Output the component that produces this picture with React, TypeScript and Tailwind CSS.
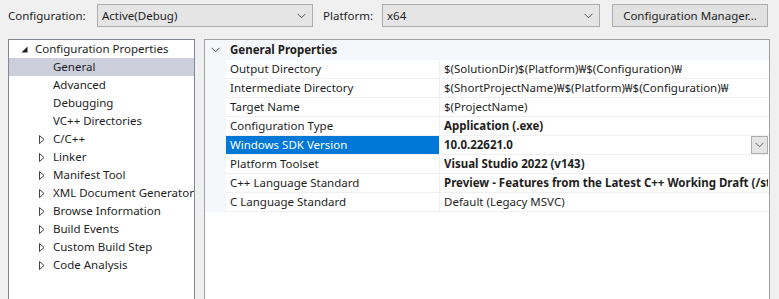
import React from 'react';

const font = { fontFamily: '"Noto Sans", "Noto Sans CJK KR", sans-serif' };

const Chevron: React.FC<{ className?: string }> = ({ className }) => (
  <svg width="9" height="6" viewBox="0 0 9 6" className={className}>
    <path d="M0.5 0.8 L4.5 4.8 L8.5 0.8" fill="none" stroke="currentColor" strokeWidth="1" />
  </svg>
);

const Combo: React.FC<{ value: string; width: string }> = ({ value, width }) => (
  <div className={`${width} h-[23px] flex items-center justify-between border border-[#adadad] bg-[#e5e5e5] pl-[4px] pr-[6px]`}>
    <span>{value}</span>
    <Chevron className="text-[#606060]" />
  </div>
);

const Collapsed = () => (
  <svg width="6" height="9" viewBox="0 0 6 9" className="text-[#404040]">
    <path d="M0.5 0.5 L5 4.5 L0.5 8.5 Z" fill="none" stroke="currentColor" strokeWidth="1" />
  </svg>
);

const Expanded = () => (
  <svg width="7" height="7" viewBox="0 0 7 7">
    <path d="M6.5 0.5 L6.5 6.5 L0.5 6.5 Z" fill="#1e1e1e" />
  </svg>
);

const treeItems: { label: string; expandable?: boolean }[] = [
  { label: 'General' },
  { label: 'Advanced' },
  { label: 'Debugging' },
  { label: 'VC++ Directories' },
  { label: 'C/C++', expandable: true },
  { label: 'Linker', expandable: true },
  { label: 'Manifest Tool', expandable: true },
  { label: 'XML Document Generator', expandable: true },
  { label: 'Browse Information', expandable: true },
  { label: 'Build Events', expandable: true },
  { label: 'Custom Build Step', expandable: true },
  { label: 'Code Analysis', expandable: true },
];

const rows: { name: string; value: string; bold?: boolean; selected?: boolean }[] = [
  { name: 'Output Directory', value: '$(SolutionDir)$(Platform)₩$(Configuration)₩' },
  { name: 'Intermediate Directory', value: '$(ShortProjectName)₩$(Platform)₩$(Configuration)₩' },
  { name: 'Target Name', value: '$(ProjectName)' },
  { name: 'Configuration Type', value: 'Application (.exe)', bold: true },
  { name: 'Windows SDK Version', value: '10.0.22621.0', bold: true, selected: true },
  { name: 'Platform Toolset', value: 'Visual Studio 2022 (v143)', bold: true },
  { name: 'C++ Language Standard', value: 'Preview - Features from the Latest C++ Working Draft (/std:c++latest)', bold: true },
  { name: 'C Language Standard', value: 'Default (Legacy MSVC)' },
];

export default function App() {
  return (
    <div className="w-[779px] h-[299px] bg-[#f0f0f0] overflow-hidden text-[11.5px] text-[#1e1e1e]" style={font}>
      {/* toolbar */}
      <div className="flex items-center h-[30px] pt-[1px] pl-[8px]">
        <span className="w-[89px]">Configuration:</span>
        <Combo value="Active(Debug)" width="w-[216px]" />
        <span className="ml-[10px] w-[59px]">Platform:</span>
        <Combo value="x64" width="w-[218px]" />
        <div className="ml-[12px] w-[156px] h-[23px] flex items-center justify-center border border-[#adadad] bg-[#e1e1e1]">
          Configuration Manager...
        </div>
      </div>

      <div className="flex mt-[9px] h-[270px]">
        {/* tree */}
        <div className="ml-[8px] w-[187px] shrink-0 h-full border border-[#828790] bg-white overflow-hidden">
          <div className="h-[18px] flex items-center pl-[12px] gap-[7px] whitespace-nowrap">
            <Expanded />
            <span>Configuration Properties</span>
          </div>
          {treeItems.map((item) => (
            <div
              key={item.label}
              className={`h-[18px] flex items-center whitespace-nowrap ${item.label === 'General' ? 'bg-[#cccedb]' : ''}`}
            >
              <div className="w-[44px] shrink-0 flex justify-end pr-[8px]">{item.expandable && <Collapsed />}</div>
              <span>{item.label}</span>
            </div>
          ))}
        </div>

        {/* property grid */}
        <div className="ml-[9px] w-[566px] shrink-0 h-full border border-[#a0a0a0] bg-white overflow-hidden">
          <div className="h-[20px] flex items-center bg-[#f5f7fa]">
            <div className="w-[21px] shrink-0 flex justify-center">
              <Chevron className="text-[#505050]" />
            </div>
            <span className="font-bold pl-[4px]">General Properties</span>
          </div>
          <div className="flex">
            <div className="w-[21px] shrink-0 bg-[#f5f7fa]" />
            <div className="flex-1 min-w-0">
              {rows.map((r) => (
                <div key={r.name} className="flex h-[19px] border-b border-[#f0f0f0]">
                  <div
                    className={`w-[214px] shrink-0 flex items-center pl-[4px] border-r border-[#f0f0f0] ${r.selected ? 'bg-[#0078d7] text-white' : ''}`}
                  >
                    {r.name}
                  </div>
                  <div className="flex-1 min-w-0 flex items-center pl-[4px] pr-[1px] overflow-hidden whitespace-nowrap">
                    <span className={`flex-1 min-w-0 overflow-hidden ${r.bold ? 'font-bold' : ''}`}>{r.value}</span>
                    {r.selected && (
                      <div className="w-[17px] h-[18px] shrink-0 flex items-center justify-center border border-[#adadad] bg-[#e5e5e5]">
                        <Chevron className="text-[#606060]" />
                      </div>
                    )}
                  </div>
                </div>
              ))}
            </div>
          </div>
        </div>
      </div>
    </div>
  );
}
